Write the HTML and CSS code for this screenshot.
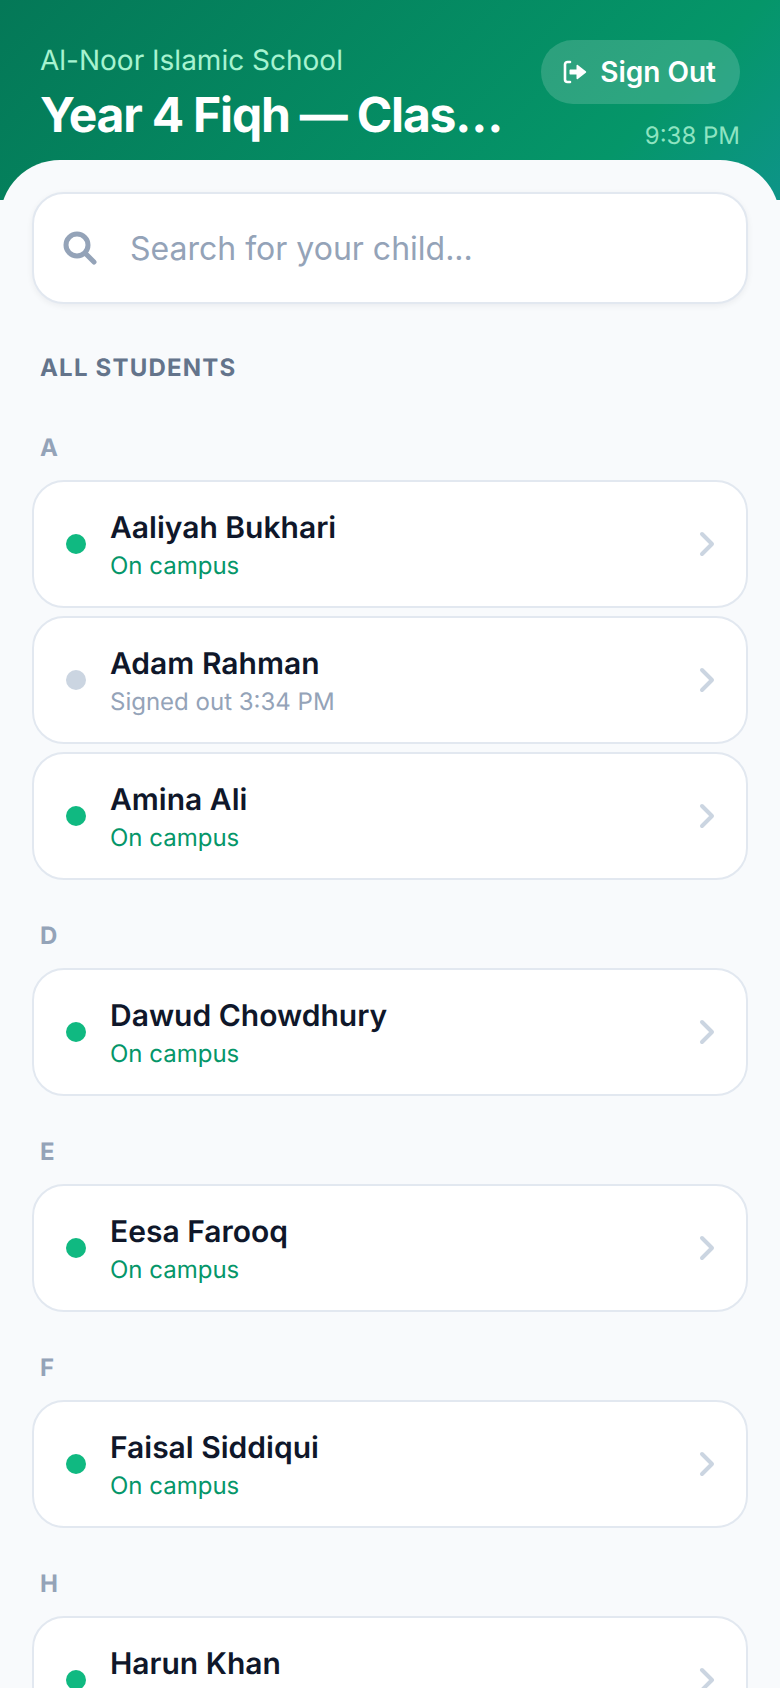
FILE: index.html
```html
<!DOCTYPE html>
<html lang="en">
<head>
    <meta charset="UTF-8">
    <meta name="viewport" content="width=device-width, initial-scale=1.0">
    <title>Al-Noor Islamic School</title>
    <link rel="stylesheet" href="styles.css">
</head>
<body>
<div class="app">
    <header class="top">
        <div class="top-left">
            <div class="school">Al-Noor Islamic School</div>
            <h1 class="class-name">Year 4 Fiqh — Class Sign Out</h1>
        </div>
        <div class="top-right">
            <button class="sign-out">
                <svg width="26" height="26" viewBox="0 0 26 26" fill="none">
                    <path d="M8 3H5.5A2.5 2.5 0 0 0 3 5.5v15A2.5 2.5 0 0 0 5.5 23H8" stroke="#fff" stroke-width="2.6" stroke-linecap="round"/>
                    <path d="M8.5 10.5h6V6.6c0-.7.8-1 1.3-.6l8 6.2c.5.4.5 1.2 0 1.6l-8 6.2c-.5.4-1.3.1-1.3-.6v-3.9h-6c-.6 0-1-.4-1-1v-3c0-.6.4-1 1-1z" fill="#fff"/>
                </svg>
                Sign Out
            </button>
            <div class="clock">9:38 PM</div>
        </div>
    </header>

    <main class="content">
        <div class="search">
            <svg width="36" height="36" viewBox="0 0 36 36" fill="none">
                <circle cx="15" cy="15" r="11" stroke="#94a3b8" stroke-width="5"/>
                <path d="M23.5 23.5L32 32" stroke="#94a3b8" stroke-width="5" stroke-linecap="round"/>
            </svg>
            <input type="text" placeholder="Search for your child...">
        </div>

        <div class="list-title">ALL STUDENTS</div>

        <section class="group">
            <div class="letter">A</div>
            <div class="card">
                <span class="dot"></span>
                <div class="info"><div class="name">Aaliyah Bukhari</div><div class="status">On campus</div></div>
                <svg class="chev" width="20" height="28" viewBox="0 0 20 28" fill="none"><path d="M4 4l10 10L4 24" stroke="#cbd5e1" stroke-width="4" stroke-linecap="round" stroke-linejoin="round"/></svg>
            </div>
            <div class="card">
                <span class="dot out"></span>
                <div class="info"><div class="name">Adam Rahman</div><div class="status out">Signed out 3:34 PM</div></div>
                <svg class="chev" width="20" height="28" viewBox="0 0 20 28" fill="none"><path d="M4 4l10 10L4 24" stroke="#cbd5e1" stroke-width="4" stroke-linecap="round" stroke-linejoin="round"/></svg>
            </div>
            <div class="card">
                <span class="dot"></span>
                <div class="info"><div class="name">Amina Ali</div><div class="status">On campus</div></div>
                <svg class="chev" width="20" height="28" viewBox="0 0 20 28" fill="none"><path d="M4 4l10 10L4 24" stroke="#cbd5e1" stroke-width="4" stroke-linecap="round" stroke-linejoin="round"/></svg>
            </div>
        </section>

        <section class="group">
            <div class="letter">D</div>
            <div class="card">
                <span class="dot"></span>
                <div class="info"><div class="name">Dawud Chowdhury</div><div class="status">On campus</div></div>
                <svg class="chev" width="20" height="28" viewBox="0 0 20 28" fill="none"><path d="M4 4l10 10L4 24" stroke="#cbd5e1" stroke-width="4" stroke-linecap="round" stroke-linejoin="round"/></svg>
            </div>
        </section>

        <section class="group">
            <div class="letter">E</div>
            <div class="card">
                <span class="dot"></span>
                <div class="info"><div class="name">Eesa Farooq</div><div class="status">On campus</div></div>
                <svg class="chev" width="20" height="28" viewBox="0 0 20 28" fill="none"><path d="M4 4l10 10L4 24" stroke="#cbd5e1" stroke-width="4" stroke-linecap="round" stroke-linejoin="round"/></svg>
            </div>
        </section>

        <section class="group">
            <div class="letter">F</div>
            <div class="card">
                <span class="dot"></span>
                <div class="info"><div class="name">Faisal Siddiqui</div><div class="status">On campus</div></div>
                <svg class="chev" width="20" height="28" viewBox="0 0 20 28" fill="none"><path d="M4 4l10 10L4 24" stroke="#cbd5e1" stroke-width="4" stroke-linecap="round" stroke-linejoin="round"/></svg>
            </div>
        </section>

        <section class="group">
            <div class="letter">H</div>
            <div class="card">
                <span class="dot"></span>
                <div class="info"><div class="name">Harun Khan</div><div class="status">On campus</div></div>
                <svg class="chev" width="20" height="28" viewBox="0 0 20 28" fill="none"><path d="M4 4l10 10L4 24" stroke="#cbd5e1" stroke-width="4" stroke-linecap="round" stroke-linejoin="round"/></svg>
            </div>
        </section>
    </main>
</div>
</body>
</html>
```

FILE: styles.css
```css
* {
    box-sizing: border-box;
}
body {
    margin: 0;
    background-color: #f8fafc;
    font-family: Inter, "Liberation Sans", sans-serif;
    text-rendering: geometricPrecision;
}
.app {
    height: 100vh;
    overflow: hidden;
}

.top {
    position: relative;
    display: flex;
    justify-content: space-between;
    height: 200px;
    padding: 40px 40px 0;
    overflow: hidden;
    background: linear-gradient(135deg, #047857 0%, #059669 78%, #0d9488 100%);
}
.top::after {
    content: "";
    position: absolute;
    left: 0;
    right: 0;
    bottom: -40px;
    height: 80px;
    background-color: #f8fafc;
    border-radius: 60px 60px 0 0;
}
.top-left {
    min-width: 0;
    width: 472px;
}
.school {
    margin-top: 3px;
    font-size: 28px;
    line-height: 34px;
    color: #a7f3d0;
}
.class-name {
    margin: 10px 0 0;
    font-size: 48px;
    line-height: 56px;
    font-weight: 700;
    letter-spacing: -1.2px;
    color: #fff;
    white-space: nowrap;
    overflow: hidden;
    text-overflow: ellipsis;
}
.top-right {
    display: flex;
    flex-direction: column;
    align-items: flex-end;
    gap: 17px;
}
.sign-out {
    display: flex;
    align-items: center;
    gap: 12px;
    height: 64px;
    padding: 0 24px 0 21px;
    border: none;
    border-radius: 32px;
    background-color: rgba(255, 255, 255, 0.16);
    color: #fff;
    font-family: inherit;
    font-size: 28px;
    font-weight: 600;
}
.clock {
    font-size: 24px;
    line-height: 30px;
    color: rgba(167, 243, 208, 0.85);
}

.content {
    position: relative;
    padding: 0 32px;
    margin-top: -8px;
}
.search {
    display: flex;
    align-items: center;
    gap: 32px;
    height: 112px;
    padding: 0 30px 0 28px;
    background-color: #fff;
    border: 2px solid #e2e8f0;
    border-radius: 32px;
    box-shadow: 0 2px 6px rgba(15, 23, 42, 0.06);
}
.search input {
    flex: 1;
    border: none;
    outline: none;
    background: none;
    padding: 0;
    font-family: inherit;
    font-size: 32px;
    color: #0f172a;
}
.search input::placeholder {
    color: #94a3b8;
}
.list-title {
    margin: 49px 8px 0;
    font-size: 24px;
    line-height: 30px;
    font-weight: 700;
    letter-spacing: 1.2px;
    color: #64748b;
}

.group {
    display: flex;
    flex-direction: column;
    gap: 8px;
    margin-bottom: 40px;
}
.letter {
    margin: 0 8px 8px;
    font-size: 24px;
    line-height: 32px;
    font-weight: 700;
    color: #94a3b8;
}
.list-title + .group {
    margin-top: 49px;
}
.card {
    display: flex;
    align-items: center;
    height: 128px;
    padding: 0 28px 0 32px;
    background-color: #fff;
    border: 2px solid #e2e8f0;
    border-radius: 32px;
}
.dot {
    flex-shrink: 0;
    width: 20px;
    height: 20px;
    border-radius: 50%;
    background-color: #10b981;
    margin-right: 24px;
}
.dot.out {
    background-color: #cbd5e1;
}
.info {
    flex: 1;
    padding-top: 3px;
}
.name {
    font-size: 30px;
    line-height: 38px;
    font-weight: 600;
    color: #0f172a;
}
.status {
    margin-top: 3px;
    font-size: 24px;
    line-height: 32px;
    color: #059669;
}
.status.out {
    color: #94a3b8;
}
```
